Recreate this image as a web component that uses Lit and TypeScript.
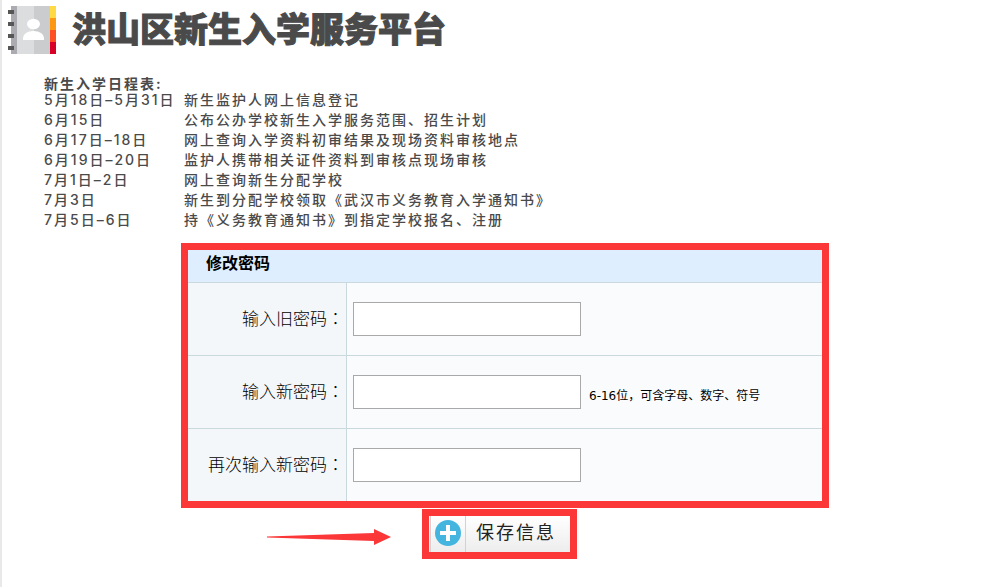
import { LitElement, html, css, nothing } from "lit";
import { customElement } from "lit/decorators.js";

interface ScheduleItem {
  date: string;
  event: string;
}

interface PasswordField {
  id: string;
  label: string;
  autocomplete: "current-password" | "new-password";
  hint?: string;
}

const SCHEDULE: ScheduleItem[] = [
  { date: "5月18日–5月31日", event: "新生监护人网上信息登记" },
  { date: "6月15日", event: "公布公办学校新生入学服务范围、招生计划" },
  { date: "6月17日–18日", event: "网上查询入学资料初审结果及现场资料审核地点" },
  { date: "6月19日–20日", event: "监护人携带相关证件资料到审核点现场审核" },
  { date: "7月1日–2日", event: "网上查询新生分配学校" },
  { date: "7月3日", event: "新生到分配学校领取《武汉市义务教育入学通知书》" },
  { date: "7月5日–6日", event: "持《义务教育通知书》到指定学校报名、注册" },
];

const FIELDS: PasswordField[] = [
  { id: "old", label: "输入旧密码", autocomplete: "current-password" },
  { id: "new", label: "输入新密码", autocomplete: "new-password", hint: "6-16位，可含字母、数字、符号" },
  { id: "again", label: "再次输入新密码", autocomplete: "new-password" },
];

@customElement("site-header")
export class SiteHeader extends LitElement {
  static styles = css`
    :host {
      display: flex;
      align-items: center;
      gap: 16px;
      padding: 6px 6px 0;
    }
    .logo {
      flex: none;
      width: 48px;
      height: 48px;
    }
    .title {
      margin: 0;
      font-size: 34px;
      line-height: 48px;
      font-weight: 900;
      color: #4a4a4a;
      -webkit-text-stroke: 1px #4a4a4a;
    }
  `;

  render() {
    return html`
      <svg class="logo" viewBox="0 0 48 48" aria-hidden="true">
        <rect x="3" width="6" height="48" fill="#acabb1" />
        <rect x="9" width="17" height="48" fill="#dcdddf" />
        <rect x="26" width="16" height="48" fill="#cbcccd" />
        <rect x="42" width="6" height="12" fill="#ffda44" />
        <rect x="42" y="12" width="6" height="12" fill="#ff9811" />
        <rect x="42" y="24" width="6" height="12" fill="#ff5023" />
        <rect x="42" y="36" width="6" height="12" fill="#d80027" />
        <path d="M0 4h6v4H0zM0 16h6v4H0zM0 28h6v4H0zM0 40h6v4H0z" fill="#565656" />
        <ellipse cx="25.500" cy="18" rx="6.500" ry="5.200" fill="#fff" />
        <path d="M15 34v-1.500C15 28 19.500 25 25.500 25S36 28 36 32.500V34z" fill="#fff" />
      </svg>
      <h1 class="title">洪山区新生入学服务平台</h1>
    `;
  }
}

@customElement("enrolment-schedule")
export class EnrolmentSchedule extends LitElement {
  static styles = css`
    :host {
      display: block;
      padding: 24px 16px 0 42px;
      font-family: Inter, "Noto Sans CJK SC", sans-serif;
      font-size: 14px;
      line-height: 20px;
      letter-spacing: 2px;
      color: #4a4a4a;
    }
    .heading {
      margin: 0;
      font-size: 14px;
      line-height: 12px;
    }
    .list {
      display: grid;
      grid-template-columns: 140px 1fr;
      margin: 0;
      font-weight: 500;
    }
    .date,
    .event {
      margin: 0;
      white-space: nowrap;
    }
  `;

  render() {
    return html`
      <h2 class="heading">新生入学日程表:</h2>
      <dl class="list">
        ${SCHEDULE.map(
          (item) => html`
            <dt class="date">${item.date}</dt>
            <dd class="event">${item.event}</dd>
          `
        )}
      </dl>
    `;
  }
}

@customElement("password-form")
export class PasswordForm extends LitElement {
  static styles = css`
    :host {
      display: block;
      padding: 13px 16px 0 179px;
      color: #000;
    }
    * {
      box-sizing: border-box;
    }
    .panel {
      max-width: 648px;
      border: 7px solid #fb3737;
      background: #fafbfd;
    }
    .heading {
      margin: 0;
      padding: 0 18px 4px;
      font-size: 16px;
      line-height: 28px;
      background: #dfeeff;
    }
    .row {
      display: grid;
      grid-template-columns: 159px 1fr;
      min-height: 73px;
      border-top: 1px solid #c9d9dd;
    }
    .label {
      display: flex;
      align-items: center;
      justify-content: flex-end;
      padding: 0 2px 4px 0;
      border-right: 1px solid #c9d9dd;
      background: #f3f7fa;
      font-size: 17px;
      font-weight: 300;
    }
    .colon {
      font-family: "Noto Sans CJK TC", sans-serif;
    }
    .field {
      display: flex;
      align-items: center;
      gap: 8px;
      padding: 0 6px;
    }
    .input {
      width: 228px;
      height: 34px;
      padding: 0 8px;
      border: 1px solid #a9a9a9;
      background: #fff;
      font: inherit;
    }
    .hint {
      padding-top: 4px;
      font-family: "DejaVu Sans", "Noto Sans CJK SC", sans-serif;
      font-size: 12px;
    }
    .actions {
      display: flex;
      align-items: center;
      gap: 31px;
      padding: 1px 0 0 86px;
    }
    .arrow {
      flex: none;
      width: 124px;
      height: 16px;
      margin-top: 5px;
    }
    .save {
      display: flex;
      align-items: stretch;
      height: 50px;
      width: 155px;
      padding: 0 0 0 1px;
      border: 7px solid #fb3737;
      background: linear-gradient(#fff, #ededed);
      font-family: inherit;
      font-size: 18px;
      letter-spacing: 2px;
      color: #222;
      cursor: pointer;
    }
    .badge {
      display: flex;
      align-items: center;
      justify-content: center;
      width: 36px;
      padding-bottom: 2px;
      border: solid #d2d2d2;
      border-width: 0 1px;
    }
    .plus {
      width: 26px;
      height: 26px;
    }
    .caption {
      padding-left: 10px;
      line-height: 34px;
      white-space: nowrap;
    }
  `;

  private onSubmit(event: Event) {
    event.preventDefault();
  }

  render() {
    return html`
      <form @submit=${this.onSubmit}>
        <div class="panel">
          <h2 class="heading">修改密码</h2>
          ${FIELDS.map(
            (field) => html`
              <div class="row">
                <label class="label" for=${field.id}>${field.label}<span class="colon">：</span></label>
                <div class="field">
                  <input
                    class="input"
                    type="password"
                    id=${field.id}
                    name=${field.id}
                    autocomplete=${field.autocomplete}
                  />
                  ${field.hint ? html`<span class="hint">${field.hint}</span>` : nothing}
                </div>
              </div>
            `
          )}
        </div>
        <div class="actions">
          <svg class="arrow" viewBox="0 0 124 16" aria-hidden="true">
            <path d="M0 7.500 107 4V0l17 8-17 8v-4L0 8.500z" fill="#fb3737" />
          </svg>
          <button class="save" type="submit">
            <span class="badge">
              <svg class="plus" viewBox="0 0 26 26" aria-hidden="true">
                <circle cx="13" cy="13" r="13" fill="#44b5df" />
                <path d="M11 5h4v6h6v4h-6v6h-4v-6H5v-4h6z" fill="#fff" />
              </svg>
            </span>
            <span class="caption">保存信息</span>
          </button>
        </div>
      </form>
    `;
  }
}

@customElement("app-root")
export class AppRoot extends LitElement {
  static styles = css`
    :host {
      display: block;
      box-sizing: border-box;
      min-height: 100vh;
      border-left: 2px solid #e9e9e9;
      background: #fff;
      font-family: "Liberation Sans", "Noto Sans CJK SC", sans-serif;
    }
  `;

  render() {
    return html`
      <site-header></site-header>
      <main>
        <enrolment-schedule></enrolment-schedule>
        <password-form></password-form>
      </main>
    `;
  }
}
